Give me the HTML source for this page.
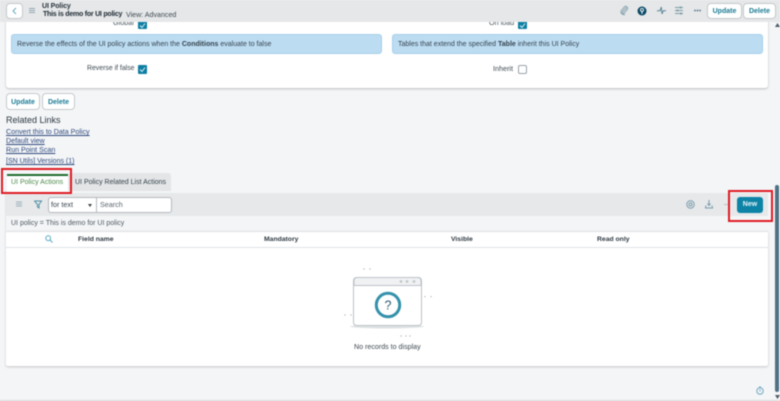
<!DOCTYPE html>
<html><head><meta charset="utf-8">
<style>
html,body{margin:0;padding:0}
body{width:780px;height:401px;overflow:hidden;background:#f4f5f7;position:relative;font-family:"Liberation Sans",sans-serif;color:#2e3a44}
#w{position:absolute;left:0;top:0;width:780px;height:401px;filter:blur(.4px)}
#w div,#w svg{position:absolute}
.t{white-space:nowrap;font-size:7.2px;line-height:10px}
.b{font-weight:bold}
.btn{background:#fff;border:1px solid #c6cacd;border-radius:3px;box-sizing:border-box;color:#1b7c95;font-weight:bold;font-size:7px;text-align:center;white-space:nowrap}
.cb{width:9px;height:9px;background:#0e7fa3;border-radius:1px}
.info{background:#bcdcf2;border:1px solid #a9d0ea;border-radius:3px;box-sizing:border-box;height:20px;top:34px;font-size:7px;line-height:20px;padding-left:5px;white-space:nowrap;color:#36434d}
.lnk{color:#2e4a7d;text-decoration:underline;left:6px;font-size:7.1px;line-height:10px;white-space:nowrap}
.h{font-size:6.8px;top:235px;color:#2f3a43;font-weight:bold}
</style></head><body><div id="w">
<!-- form card -->
<div style="left:6px;top:20px;width:762px;height:68px;background:#fff;border-radius:0 0 3px 3px;box-shadow:0 1px 2px #b9bcbf"></div>
<!-- form fields -->
<div class="t" style="left:113px;top:18px;color:#4a555d">Global</div>
<div class="cb" style="left:138px;top:20px"></div>
<svg style="left:139px;top:22px" width="7" height="7" viewBox="0 0 7 7"><path d="M1 3.500l2 2 3-4" fill="none" stroke="#d9eef5" stroke-width="1"/></svg>
<div class="t" style="left:489px;top:18px;color:#4a555d">On load</div>
<div class="cb" style="left:518px;top:20px"></div>
<svg style="left:519px;top:22px" width="7" height="7" viewBox="0 0 7 7"><path d="M1 3.500l2 2 3-4" fill="none" stroke="#d9eef5" stroke-width="1"/></svg>
<!-- top bar -->
<div style="left:0;top:0;width:780px;height:22px;background:#e5e7e8"></div>
<div class="btn" style="left:6px;top:3px;width:17px;height:16px;border-radius:4px"></div>
<svg style="left:11px;top:7px" width="7" height="8" viewBox="0 0 7 8"><path d="M5 1L2 4l3 3" fill="none" stroke="#6aa9c0" stroke-width="1"/></svg>
<svg style="left:29px;top:8px" width="7" height="6" viewBox="0 0 7 6"><path d="M0 .5h6M0 2.500h6M0 4.500h6" stroke="#93a8b3" stroke-width="1"/></svg>
<div class="t b" style="left:42px;top:2px;font-size:7px;color:#28343d;letter-spacing:-.1px">UI Policy</div>
<div class="t b" style="left:43px;top:10px;font-size:7px;color:#1d2a33;letter-spacing:-.23px">This is demo for UI policy</div>
<div class="t" style="left:126px;top:10px;font-size:7.1px;color:#3d4a53">View: Advanced</div>
<svg style="left:619px;top:5px" width="10" height="11" viewBox="0 0 10 11"><path d="M7.500 2.500L3.500 7a1 1 0 0 0 1.500 1.300l3.500-4.300A2 2 0 0 0 5.700 1.600L2 6.200a3 3 0 0 0 4 3.300" fill="none" stroke="#8fa8b3" stroke-width="1.100"/></svg>
<svg style="left:637px;top:6px" width="10" height="10" viewBox="0 0 10 10"><circle cx="5" cy="5" r="4.500" fill="#0b4a66"/><circle cx="5" cy="3.900" r="1.500" fill="none" stroke="#fff" stroke-width=".9"/><path d="M5 5.800V7.900" stroke="#fff" stroke-width="1"/></svg>
<svg style="left:657px;top:6px" width="9" height="9" viewBox="0 0 9 9"><path d="M0 4.800h3L4.300 1l.7 7 1.200-3.200H9" fill="none" stroke="#5b8799" stroke-width="1"/></svg>
<svg style="left:675px;top:6px" width="9" height="9" viewBox="0 0 9 9"><path d="M0 1.500h8M0 4.500h8M0 7.500h8" stroke="#7f9eaa" stroke-width=".9"/><circle cx="5.500" cy="1.500" r="1.100" fill="#7f9eaa"/><circle cx="2.500" cy="4.500" r="1.100" fill="#7f9eaa"/><circle cx="6" cy="7.500" r="1.100" fill="#7f9eaa"/></svg>
<svg style="left:694px;top:9px" width="7" height="3" viewBox="0 0 7 3"><circle cx="1" cy="1.500" r=".9" fill="#4f7486"/><circle cx="3.500" cy="1.500" r=".9" fill="#4f7486"/><circle cx="6" cy="1.500" r=".9" fill="#4f7486"/></svg>
<div class="btn" style="left:707px;top:3px;width:35px;height:16px;line-height:15px;border-radius:4px">Update</div>
<div class="btn" style="left:743px;top:3px;width:33px;height:16px;line-height:15px;border-radius:4px">Delete</div>
<div class="info" style="left:11px;width:371px">Reverse the effects of the UI policy actions when the <b>Conditions</b> evaluate to false</div>
<div class="info" style="left:392px;width:371px">Tables that extend the specified <b>Table</b> inherit this UI Policy</div>
<div class="t" style="left:87px;top:64px;font-size:6.9px;color:#3f4a52">Reverse if false</div>
<div class="cb" style="left:138px;top:65px"></div>
<svg style="left:139px;top:66px" width="7" height="7" viewBox="0 0 7 7"><path d="M1 3.500l2 2 3-4" fill="none" stroke="#d9eef5" stroke-width="1"/></svg>
<div class="t" style="left:493px;top:64px;color:#3f4a52">Inherit</div>
<div style="left:518px;top:65px;width:9px;height:9px;box-sizing:border-box;border:1px solid #9aa3a9;border-radius:2px;background:#fff"></div>
<svg style="left:775px;top:23px" width="5" height="5" viewBox="0 0 5 5"><path d="M0 4L2.500 0 5 4z" fill="#4a5d68"/></svg>
<!-- bottom buttons -->
<div class="btn" style="left:6px;top:93px;width:34px;height:17px;line-height:17px;border-radius:4px">Update</div>
<div class="btn" style="left:42px;top:93px;width:33px;height:17px;line-height:17px;border-radius:4px">Delete</div>
<div class="t" style="left:6px;top:114px;font-size:9px;line-height:12px;color:#2b3740">Related Links</div>
<div class="lnk" style="top:127px">Convert this to Data Policy</div>
<div class="lnk" style="top:136px">Default view</div>
<div class="lnk" style="top:145px">Run Point Scan</div>
<div class="lnk" style="top:157px;font-size:7px">[SN Utils] Versions (1)</div>
<!-- tabs -->
<div style="left:68px;top:173px;width:103px;height:18px;background:#e3e5e7;border-radius:3px 3px 0 0"></div>
<div class="t" style="left:75px;top:178px;color:#36434c;font-size:7px">UI Policy Related List Actions</div>
<div style="left:7px;top:174px;width:61px;height:18px;background:#fff"></div>
<div style="left:7px;top:174px;width:61px;height:2px;background:#1f6b2d"></div>
<div class="t" style="left:11px;top:178px;color:#4e8a4e;font-size:7px">UI Policy Actions</div>
<!-- list -->
<div style="left:6px;top:193px;width:762px;height:23px;background:#e6e8ea"></div>
<svg style="left:16px;top:201px" width="7" height="7" viewBox="0 0 7 7"><path d="M0 1h6M0 3h6M0 5h6" stroke="#9fb2bc" stroke-width="1"/></svg>
<svg style="left:34px;top:200px" width="9" height="9" viewBox="0 0 9 9"><path d="M.5 1h7L5 4.500V8L3.500 7V4.500z" fill="none" stroke="#4f8fa5" stroke-width="1"/></svg>
<div style="left:48px;top:197px;width:124px;height:16px;background:#fff;border:1px solid #b4babe;border-radius:3px;box-sizing:border-box"></div>
<div style="left:96px;top:197px;width:1px;height:16px;background:#b4babe"></div>
<div class="t" style="left:51px;top:200px;color:#3a454d">for text</div>
<svg style="left:88px;top:204px" width="4" height="3" viewBox="0 0 4 3"><path d="M0 0h4L2 3z" fill="#3a454d"/></svg>
<div class="t" style="left:100px;top:200px;color:#5b666e">Search</div>
<svg style="left:686px;top:200px" width="9" height="9" viewBox="0 0 9 9"><circle cx="4.500" cy="4.500" r="3.700" fill="none" stroke="#7c9cab" stroke-width="1"/><circle cx="4.500" cy="4.500" r="1.500" fill="none" stroke="#7c9cab" stroke-width="1"/></svg>
<svg style="left:705px;top:200px" width="8" height="9" viewBox="0 0 8 9"><path d="M4 0v5M2.500 3.500L4 5.500l1.500-2M1 5.500L.5 8h7L7 5.500" fill="none" stroke="#7c9cab" stroke-width="1"/></svg>
<div style="left:724px;top:204px;width:5px;height:1px;background:#b7c0c5"></div>
<div style="left:737px;top:197px;width:26px;height:16px;background:#0d83a6;border-radius:3px;color:#e8f5f9;font-size:7px;font-weight:bold;text-align:center;line-height:16px">New</div>
<div class="t" style="left:11px;top:219px;color:#4f5a62;font-size:7px">UI policy = This is demo for UI policy</div>
<!-- table -->
<div style="left:6px;top:231px;width:762px;height:135px;background:#fff;border-top:1px solid #dfe1e3;box-sizing:border-box;box-shadow:0 1px 2px #c2c5c8;border-radius:0 0 2px 2px"></div>
<div style="left:6px;top:247px;width:762px;height:1px;background:#dfe2e4"></div>
<svg style="left:45px;top:235px" width="8" height="8" viewBox="0 0 8 8"><circle cx="3.200" cy="3.200" r="2.400" fill="none" stroke="#58a9c4" stroke-width="1"/><path d="M5 5l2.500 2.500" stroke="#58a9c4" stroke-width="1"/></svg>
<div class="t h" style="left:78px">Field name</div>
<div class="t h" style="left:264px">Mandatory</div>
<div class="t h" style="left:451px">Visible</div>
<div class="t h" style="left:597px">Read only</div>
<!-- empty illustration -->
<svg style="left:340px;top:262px" width="100" height="75" viewBox="0 0 100 75">
<ellipse cx="47" cy="64.500" rx="37" ry="2" fill="#dfe2e4"/>
<rect x="13.500" y="15.500" width="68" height="48" rx="3" fill="#fff" stroke="#bcc2c6" stroke-width="1"/>
<path d="M14 23.500V18.500a3 3 0 0 1 3-3h61a3 3 0 0 1 3 3v5z" fill="#f0f1f3" stroke="#bcc2c6" stroke-width="1"/>
<circle cx="61" cy="19.500" r="1.400" fill="#c3c8cc"/><circle cx="67" cy="19.500" r="1.400" fill="#c3c8cc"/><circle cx="74" cy="19.500" r="1.400" fill="#c3c8cc"/>
<circle cx="48" cy="43" r="11.700" fill="#fff" stroke="#3591ab" stroke-width="3"/>
<text x="48" y="47.500" text-anchor="middle" font-family="Liberation Sans, sans-serif" font-size="12.500" fill="#2e5a70">?</text>
<g fill="#b5bbc0"><circle cx="24" cy="7" r=".7"/><circle cx="30" cy="7" r=".7"/>
<circle cx="85" cy="34.700" r=".7"/><circle cx="91" cy="34.700" r=".7"/>
<circle cx="5" cy="53" r=".7"/><circle cx="11" cy="53" r=".7"/>
<circle cx="61" cy="74" r=".7"/><circle cx="66" cy="74" r=".7"/><circle cx="70" cy="74" r=".7"/></g>
</svg>
<div class="t" style="left:354px;top:342px;color:#3f4a52;font-size:7.1px">No records to display</div>
<!-- scrollbar -->
<div style="left:775px;top:185px;width:4px;height:207px;background:#4f7285;border-radius:2px"></div>
<svg style="left:775px;top:395px" width="5" height="4" viewBox="0 0 5 4"><path d="M0 0h5L2.500 4z" fill="#4a5d68"/></svg>
<svg style="left:756px;top:386px" width="8" height="9" viewBox="0 0 8 9"><circle cx="4" cy="5" r="3.200" fill="none" stroke="#6fa8bf" stroke-width="1"/><path d="M3 1h2M4 3.500V5.500" stroke="#6fa8bf" stroke-width="1"/></svg>
<div style="left:0;top:400px;width:780px;height:1px;background:#d6d8da"></div>
<div style="left:5px;top:190px;width:1px;height:176px;background:#e3e5e7"></div>
<!-- red annotation boxes -->
<div style="left:1px;top:168px;width:71px;height:26px;box-sizing:border-box;border:2px solid #e01b24"></div>
<div style="left:728px;top:190px;width:45px;height:32px;box-sizing:border-box;border:2px solid #e01b24"></div>
</div></body></html>
